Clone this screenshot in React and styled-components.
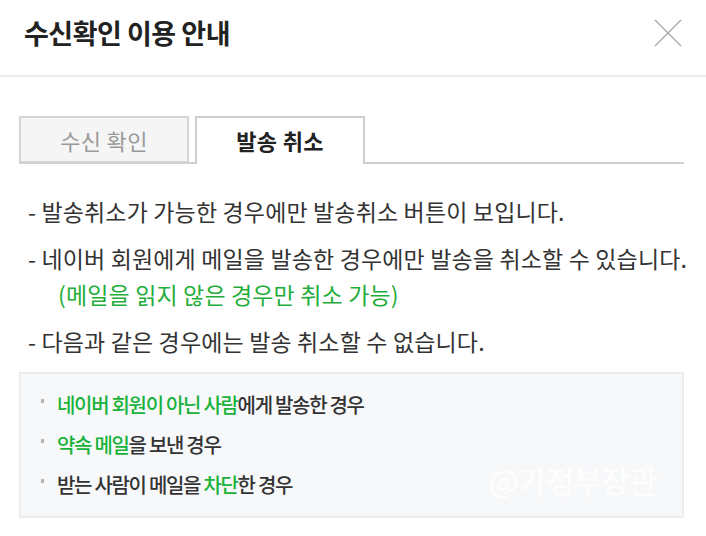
import React from 'react'
import styled, { createGlobalStyle } from 'styled-components'

const GlobalStyle = createGlobalStyle`
    html, body {
        margin: 0;
        padding: 0;
        background: #fff;
    }
    body {
        font-family: "Noto Sans CJK KR", "Noto Sans", sans-serif;
        color: #333;
    }
`

const Dialog = styled.div`
    width: 706px;
    height: 536px;
    background: #fff;
    overflow: hidden;
`

const Header = styled.div`
    display: flex;
    align-items: center;
    justify-content: space-between;
    padding: 0 23px 0 24px;
    border-bottom: 2px solid #ebebeb;
    box-sizing: border-box;
    height: 77px;
`

const Title = styled.h1`
    margin: 0;
    margin-top: -10px;
    font-size: 27px;
    font-weight: 700;
    color: #222;
    letter-spacing: -0.5px;
`

const CloseButton = styled.button`
    width: 30px;
    height: 30px;
    padding: 0;
    margin-top: -10px;
    border: none;
    background: none;
    cursor: pointer;
`

const Body = styled.div`
    padding: 37px 22px 0 19px;
`

const Tabs = styled.div`
    display: flex;
    align-items: flex-end;
    gap: 6px;
    height: 48px;
    border-bottom: 2px solid #d0d0d0;
`

const Tab = styled.div`
    width: 170px;
    box-sizing: border-box;
    display: flex;
    align-items: center;
    justify-content: center;
    border: 2px solid ${p => (p.$active ? '#d0d0d0' : '#d4d4d4')};
    border-bottom: ${p => (p.$active ? 'none' : '2px solid #d4d4d4')};
    background: ${p => (p.$active ? '#fff' : '#f5f5f5')};
    color: ${p => (p.$active ? '#222' : '#999')};
    font-size: 22px;
    font-weight: ${p => (p.$active ? 700 : 400)};
    letter-spacing: 0.3px;
    height: ${p => (p.$active ? '48px' : '47px')};
    margin-bottom: ${p => (p.$active ? '-2px' : '-1px')};
    padding-bottom: ${p => (p.$active ? '2px' : '0')};
`

const Notes = styled.div`
    padding: 34px 0 0 9px;
    display: flex;
    flex-direction: column;
`

const Note = styled.p`
    margin: 0 0 ${p => p.$gap ?? 21}px;
    font-size: 23px;
    line-height: 26px;
    color: #333;
    letter-spacing: 0.15px;
    white-space: nowrap;
`

const SubNote = styled.span`
    display: block;
    margin-top: 10px;
    padding-left: 30px;
    color: #1fae3a;
`

const InfoBox = styled.div`
    position: relative;
    margin-top: 18px;
    height: 146px;
    box-sizing: border-box;
    background: #f7f8fa;
    border: 2px solid #ebedef;
    padding: 18px 0 0 20px;
    display: flex;
    flex-direction: column;
    gap: 14px;
`

const Item = styled.div`
    display: flex;
    align-items: center;
    font-size: 20px;
    font-weight: 500;
    line-height: 26px;
    letter-spacing: -1.3px;
    color: #333;
`

const Dot = styled.span`
    width: 3px;
    height: 4px;
    background: #b5b5b5;
    margin: -8px 13px 0 0;
    flex-shrink: 0;
`

const Green = styled.span`
    color: #19b33b;
`

const Watermark = styled.span`
    position: absolute;
    right: 26px;
    bottom: 14px;
    font-size: 31px;
    font-weight: 700;
    color: rgba(255, 255, 255, 0.9);
    text-shadow: 0 0 1px rgba(0, 0, 0, 0.04);
    letter-spacing: -1px;
`

const CloseIcon = () => (
    <svg width="30" height="30" viewBox="0 0 30 30">
        <path d="M2 2 L28 28 M28 2 L2 28" stroke="#b0b0b0" strokeWidth="1.6" fill="none" />
    </svg>
)

const App = () => {
    return (
        <Dialog>
            <GlobalStyle />
            <Header>
                <Title>수신확인 이용 안내</Title>
                <CloseButton aria-label="닫기">
                    <CloseIcon />
                </CloseButton>
            </Header>
            <Body>
                <Tabs>
                    <Tab>수신 확인</Tab>
                    <Tab $active>발송 취소</Tab>
                </Tabs>
                <Notes>
                    <Note>- 발송취소가 가능한 경우에만 발송취소 버튼이 보입니다.</Note>
                    <Note>
                        - 네이버 회원에게 메일을 발송한 경우에만 발송을 취소할 수 있습니다.
                        <SubNote>(메일을 읽지 않은 경우만 취소 가능)</SubNote>
                    </Note>
                    <Note $gap={0}>- 다음과 같은 경우에는 발송 취소할 수 없습니다.</Note>
                </Notes>
                <InfoBox>
                    <Item>
                        <Dot />
                        <span><Green>네이버 회원이 아닌 사람</Green>에게 발송한 경우</span>
                    </Item>
                    <Item>
                        <Dot />
                        <span><Green>약속 메일</Green>을 보낸 경우</span>
                    </Item>
                    <Item>
                        <Dot />
                        <span>받는 사람이 메일을 <Green>차단</Green>한 경우</span>
                    </Item>
                    <Watermark>@가정부장관</Watermark>
                </InfoBox>
            </Body>
        </Dialog>
    )
}

export default App
